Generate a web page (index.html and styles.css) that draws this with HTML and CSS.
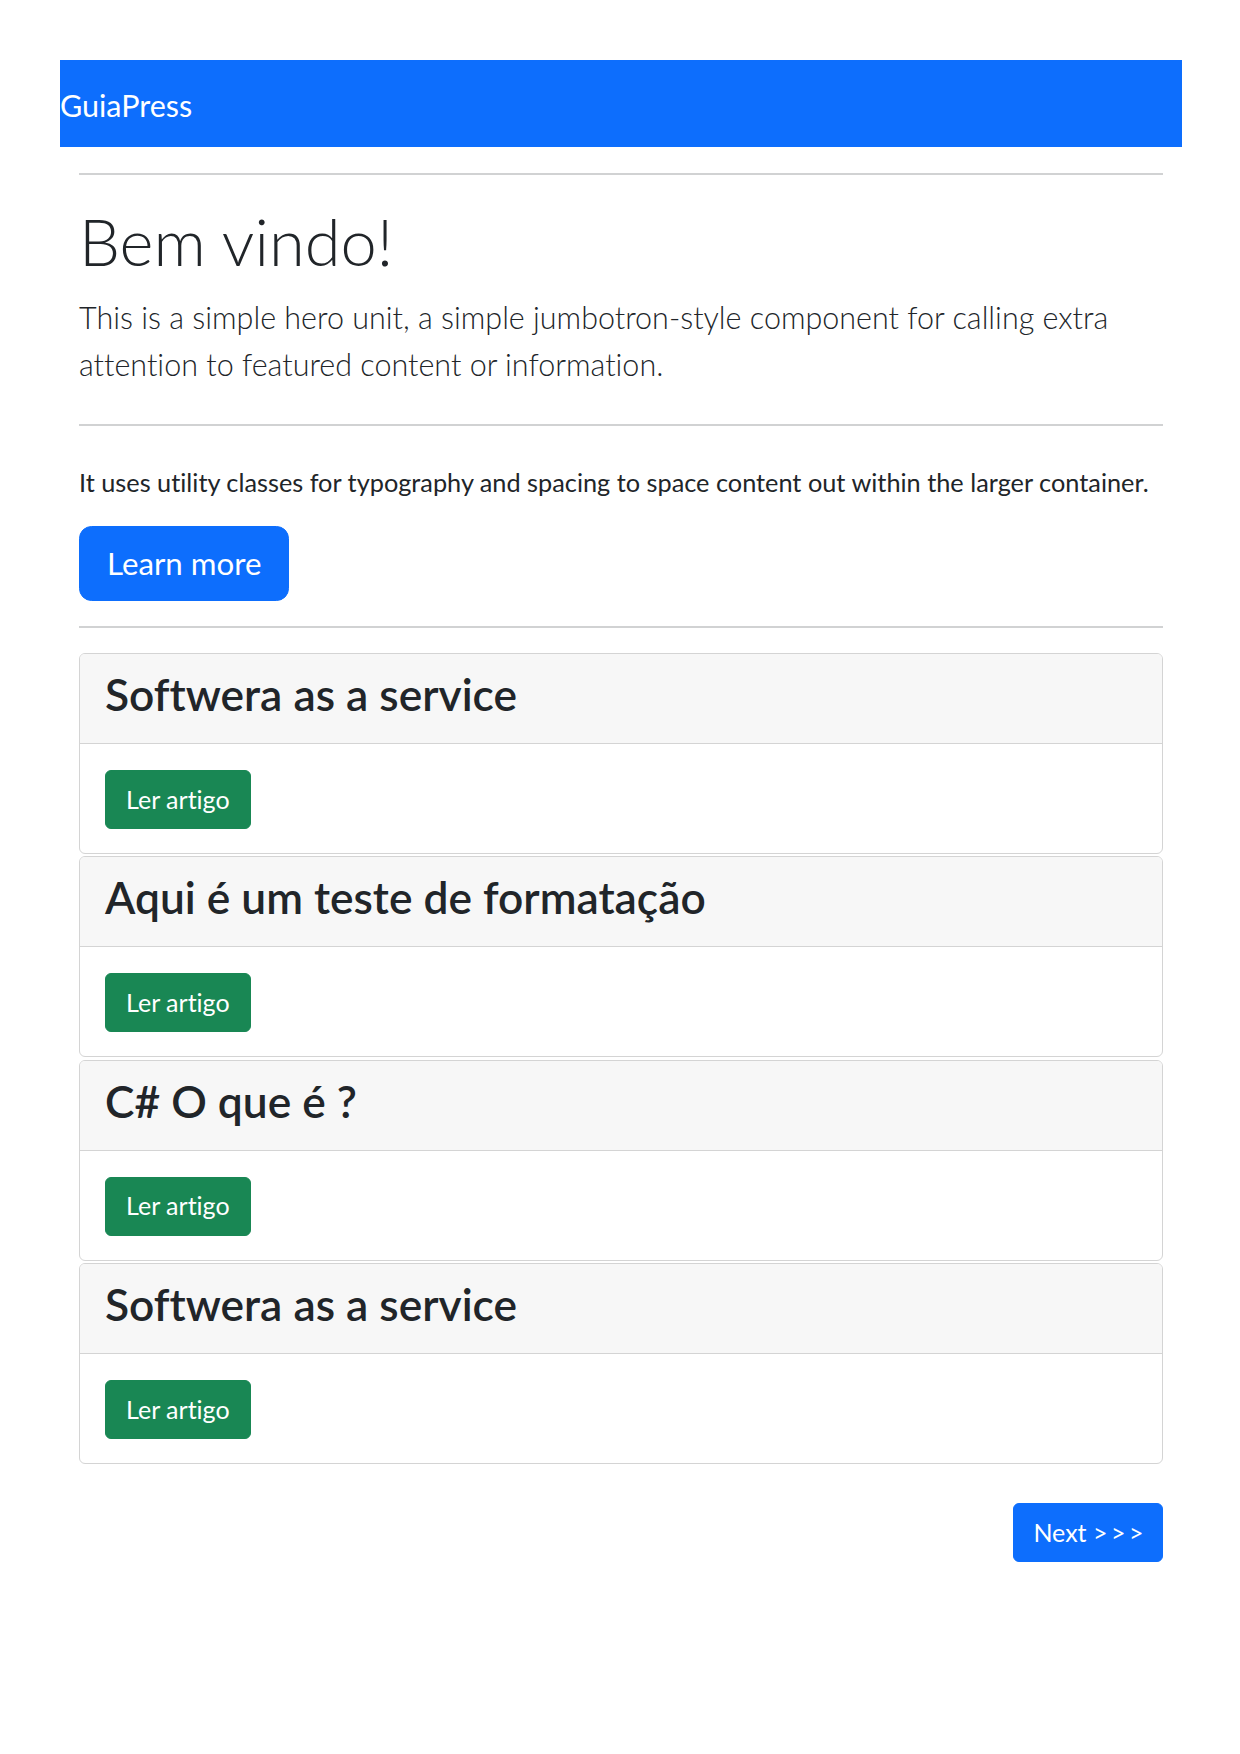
FILE: index.html
```html
<!DOCTYPE html>
<html lang="pt">
<head>
<meta charset="utf-8">
<title>GuiaPress</title>
<link rel="stylesheet" href="styles.css">
</head>
<body>
<div class="container">
  <nav class="navbar">
    <a class="brand" href="#">GuiaPress</a>
  </nav>
  <main class="main">
    <hr class="rule rule-top">
    <h1 class="display">Bem vindo!</h1>
    <p class="lead">This is a simple hero unit, a simple jumbotron-style component for calling extra attention to featured content or information.</p>
    <hr class="rule rule-mid">
    <p class="text">It uses utility classes for typography and spacing to space content out within the larger container.</p>
    <div class="actions">
      <a class="btn btn-primary btn-lg" href="#">Learn more</a>
    </div>
    <hr class="rule rule-bottom">

    <section class="cards">
      <article class="card">
        <header class="card-header"><h2 class="card-title">Softwera as a service</h2></header>
        <div class="card-body"><a class="btn btn-success" href="#">Ler artigo</a></div>
      </article>
      <article class="card">
        <header class="card-header"><h2 class="card-title">Aqui é um teste de formatação</h2></header>
        <div class="card-body"><a class="btn btn-success" href="#">Ler artigo</a></div>
      </article>
      <article class="card">
        <header class="card-header"><h2 class="card-title">C# O que é ?</h2></header>
        <div class="card-body"><a class="btn btn-success" href="#">Ler artigo</a></div>
      </article>
      <article class="card">
        <header class="card-header"><h2 class="card-title">Softwera as a service</h2></header>
        <div class="card-body"><a class="btn btn-success" href="#">Ler artigo</a></div>
      </article>
    </section>

    <div class="pager">
      <a class="btn btn-primary btn-next" href="#">Next <span class="arrows">&gt;&gt;&gt;</span></a>
    </div>
  </main>
</div>
</body>
</html>
```
FILE: styles.css
```css
* { box-sizing: border-box; }

html, body {
  margin: 0;
  padding: 0;
  background: #ffffff;
}

body {
  font-family: "Lato", "Open Sans", sans-serif;
  font-size: 25px;
  line-height: 1.5;
  color: #212529;
  font-variant-ligatures: no-common-ligatures;
  font-feature-settings: "liga" 0, "clig" 0;
}

.container {
  width: 1122px;
  margin: 0 0 0 60px;
  padding: 60px 0 80px;
}

.navbar {
  background: #0d6efd;
  padding: 22px 0 19px;
  display: flex;
}

.brand {
  color: #ffffff;
  text-decoration: none;
  font-size: 30.5px;
  line-height: 46px;
  font-weight: 400;
}

.main {
  padding: 0 19px;
}

.rule {
  border: 0;
  height: 2px;
  background: #d1d2d3;
  margin: 0;
}

.rule-top { margin-top: 26px; }
.rule-mid { margin-top: 36px; }
.rule-bottom { margin-top: 25px; }

.display {
  margin: 27px 0 14px;
  font-size: 65px;
  font-weight: 300;
  line-height: 78px;
}

.lead {
  margin: 0;
  font-size: 30.5px;
  font-weight: 300;
  line-height: 47px;
}

.text {
  margin: 38px 0 0;
  font-size: 25.3px;
  line-height: 37.5px;
}

.actions {
  display: flex;
  margin-top: 24.5px;
}

.btn {
  display: inline-block;
  color: #ffffff;
  text-decoration: none;
  border: 1px solid transparent;
  font-size: 25px;
  line-height: 37.5px;
  padding: 9.75px 20px;
  border-radius: 6px;
  white-space: nowrap;
}

.btn-primary {
  background: #0d6efd;
  border-color: #0d6efd;
}

.btn-success {
  background: #198754;
  border-color: #198754;
}

.btn-lg {
  font-size: 31.25px;
  line-height: 47px;
  padding: 13px 27px;
  border-radius: 12.5px;
}

.cards {
  margin-top: 25px;
  display: flex;
  flex-direction: column;
  gap: 2.3px;
}

.card {
  border: 1px solid #d4d4d4;
  border-radius: 6px;
  overflow: hidden;
  background: #ffffff;
}

.card-header {
  background: #f7f7f7;
  border-bottom: 1px solid #d4d4d4;
  padding: 13px 25px 23px;
}

.card-title {
  margin: 0;
  font-size: 44.3px;
  font-weight: 600;
  line-height: 53px;
}

.card-body {
  padding: 26px 25px 24px;
  display: flex;
}

.pager {
  display: flex;
  justify-content: flex-end;
  margin-top: 39px;
}

.btn-next {
  padding-left: 19px;
  padding-right: 15px;
}

.arrows {
  letter-spacing: 0.14em;
}
```
